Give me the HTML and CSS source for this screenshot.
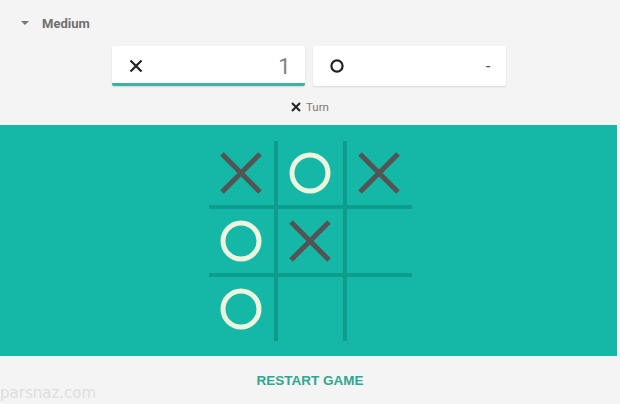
FILE: index.html
```html
<!DOCTYPE html>
<html>
<head>
<meta charset="utf-8">
<link rel="stylesheet" href="styles.css">
</head>
<body>
<div class="page">
  <div class="top">
    <div class="level">
      <svg class="caret" width="8" height="4" viewBox="0 0 8 4"><path d="M0 0h8L4 4z" fill="#777"/></svg>
      <span>Medium</span>
    </div>
  </div>
  <div class="scores">
    <div class="card active">
      <svg class="sym" width="14" height="14" viewBox="0 0 14 14"><path d="M1.5 1.5l11 11M12.5 1.5l-11 11" stroke="#222" stroke-width="2.2"/></svg>
      <span class="num">1</span>
    </div>
    <div class="card">
      <svg class="sym" width="14" height="14" viewBox="0 0 14 14"><circle cx="7" cy="7" r="5.6" fill="none" stroke="#222" stroke-width="2.2"/></svg>
      <span class="num dash">-</span>
    </div>
  </div>
  <div class="turn">
    <svg width="10" height="10" viewBox="0 0 10 10"><path d="M1 1l8 8M9 1l-8 8" stroke="#222" stroke-width="2"/></svg>
    <span>Turn</span>
  </div>
  <div class="board-band">
    <div class="board">
      <div class="cell"><svg viewBox="0 0 64 64"><path d="M13 13l38 38M51 13l-38 38" class="x"/></svg></div>
      <div class="cell"><svg viewBox="0 0 64 64"><circle cx="32" cy="32" r="18" class="o"/></svg></div>
      <div class="cell"><svg viewBox="0 0 64 64"><path d="M13 13l38 38M51 13l-38 38" class="x"/></svg></div>
      <div class="cell"><svg viewBox="0 0 64 64"><circle cx="32" cy="32" r="18" class="o"/></svg></div>
      <div class="cell"><svg viewBox="0 0 64 64"><path d="M13 13l38 38M51 13l-38 38" class="x"/></svg></div>
      <div class="cell"></div>
      <div class="cell"><svg viewBox="0 0 64 64"><circle cx="32" cy="32" r="18" class="o"/></svg></div>
      <div class="cell"></div>
      <div class="cell"></div>
    </div>
  </div>
  <div class="footer">
    <span class="restart">RESTART GAME</span>
    <span class="watermark">parsnaz.com</span>
  </div>
</div>
</body>
</html>
```
FILE: styles.css
```css
html, body {
  margin: 0;
  padding: 0;
}
body {
  background: #f4f4f4;
  font-family: Roboto, "Liberation Sans", Arial, sans-serif;
  width: 620px;
  height: 404px;
  overflow: hidden;
}
.page {
  display: flex;
  flex-direction: column;
  height: 404px;
}
.top {
  height: 46px;
  display: flex;
  align-items: center;
  padding-left: 21px;
}
.level {
  display: flex;
  align-items: center;
  gap: 13px;
  color: #6f6f6f;
  font-weight: 700;
  font-size: 13px;
}
.caret {
  display: block;
}
.scores {
  display: flex;
  justify-content: center;
  gap: 8px;
  padding-right: 3px;
}
.card {
  width: 193px;
  height: 40px;
  box-sizing: border-box;
  background: #fff;
  box-shadow: 0 1px 2px rgba(0,0,0,0.12);
  border-radius: 2px;
  display: flex;
  align-items: center;
  justify-content: space-between;
  padding: 0 14px 0 17px;
}
.card.active {
  border-bottom: 3px solid #3cb3a0;
  padding-top: 3px;
}
.sym {
  display: block;
}
.num {
  font-size: 22px;
  color: #808080;
  font-weight: 400;
}
.dash {
  font-size: 17px;
  color: #555;
  padding-right: 1px;
}
.turn {
  height: 39px;
  display: flex;
  align-items: center;
  justify-content: center;
  gap: 5px;
  font-size: 11.5px;
  color: #7b7b7b;
  padding-top: 3px;
  box-sizing: border-box;
}
.turn svg {
  display: block;
}
.board-band {
  height: 231px;
  width: 617px;
  background: #15b8a6;
  display: flex;
  justify-content: center;
  padding-top: 16px;
  box-sizing: border-box;
}
.board {
  display: grid;
  grid-template-columns: repeat(3, 65px);
  grid-template-rows: repeat(3, 64px);
  gap: 4px;
  background: #0e9d8d;
  height: 200px;
  margin-left: 3px;
}
.cell {
  background: #15b8a6;
}
.cell svg {
  display: block;
  width: 64px;
  height: 64px;
}
.x {
  stroke: #545454;
  stroke-width: 5;
  fill: none;
}
.o {
  stroke: #eef5df;
  stroke-width: 5;
  fill: none;
}
.footer {
  flex: 1;
  position: relative;
  display: flex;
  align-items: center;
  justify-content: center;
}
.restart {
  color: #32a592;
  font-family: "Liberation Sans", Arial, sans-serif;
  font-weight: 700;
  font-size: 13.5px;
}
.watermark {
  position: absolute;
  left: 0;
  bottom: 2px;
  font-family: "DejaVu Sans", sans-serif;
  font-size: 15px;
  color: #dedede;
}
```
